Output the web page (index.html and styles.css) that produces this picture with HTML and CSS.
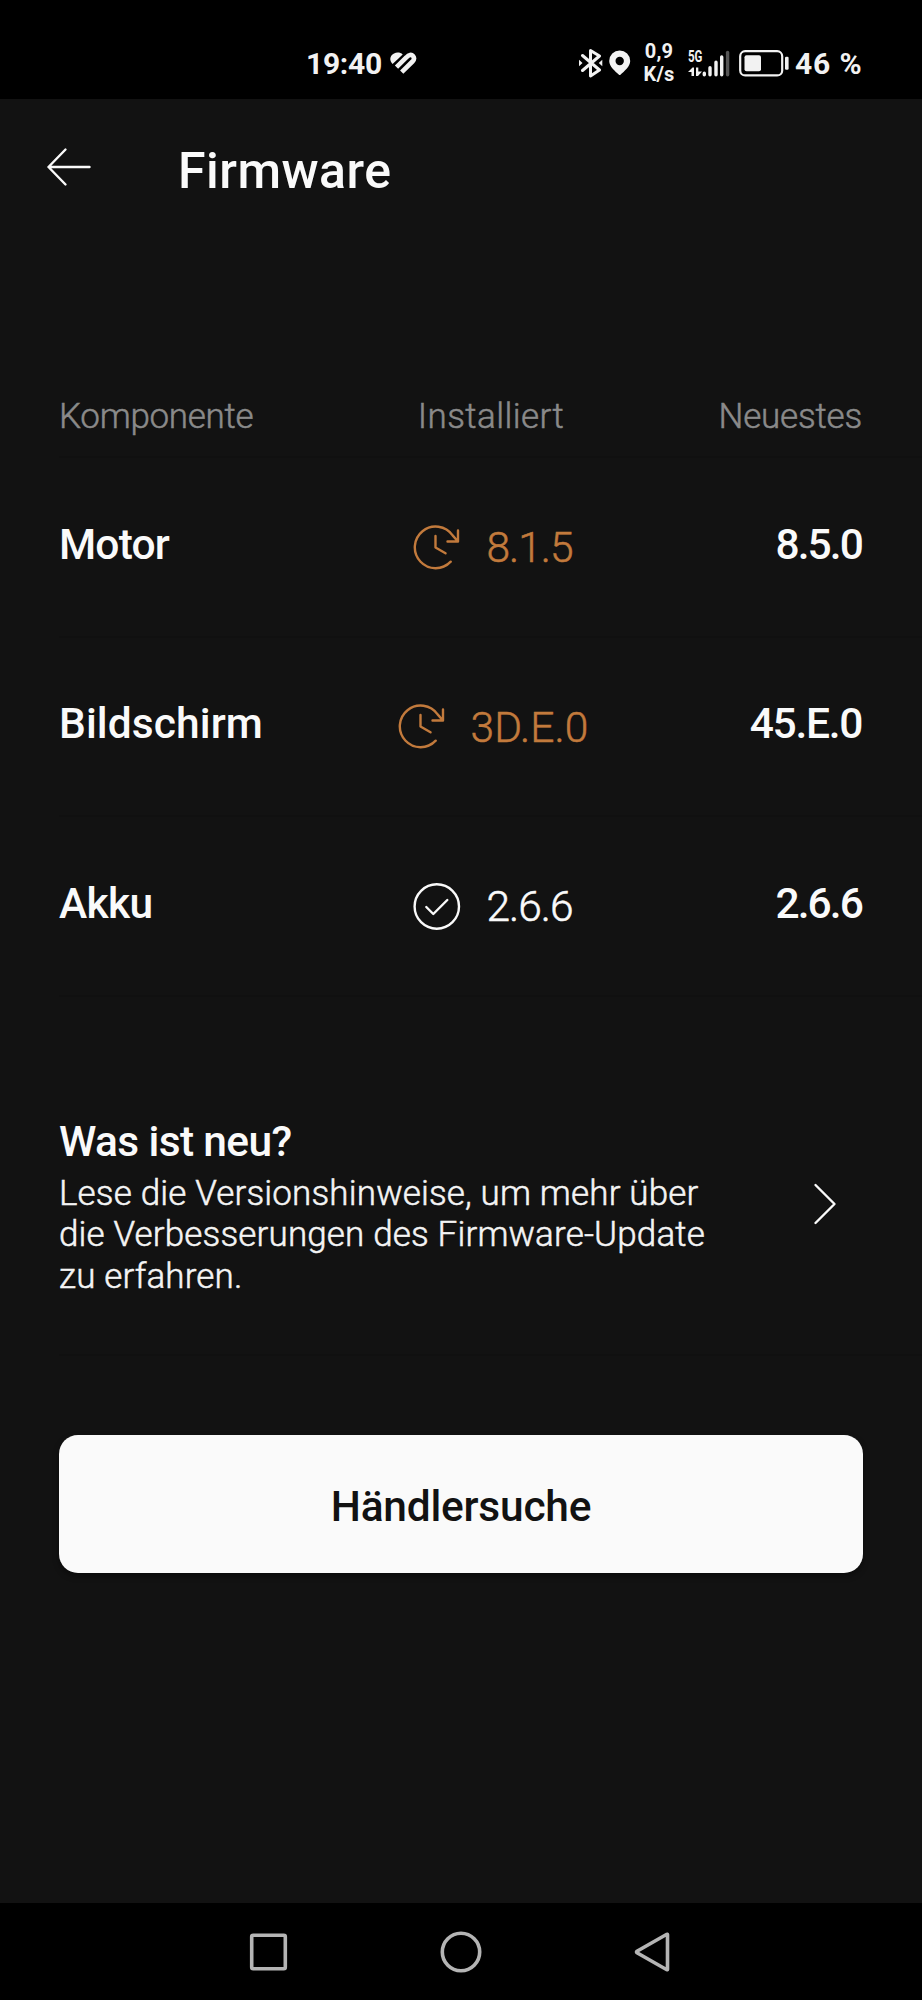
FILE: index.html
```html
<!DOCTYPE html>
<html lang="de">
<head>
<meta charset="utf-8">
<title>Firmware</title>
<link rel="stylesheet" href="styles.css">
</head>
<body>
<svg class="defs" aria-hidden="true">
  <symbol id="update" viewBox="0 0 48 48">
    <path d="M37.700 37.700A20.800 20.800 0 1 1 39.600 11.400L44.500 17M45 6.500V17.500H34.500M22.500 12V23.500l10 5.800"/>
  </symbol>
</svg>
<div class="screen">
  <header class="status">
    <div class="status-left">
      <span class="time">19:40</span>
      <svg class="heart" width="28" height="24" viewBox="390 51 28 24">
        <path class="solid" d="M393.6 64C389.8 60 391 55.500 395 53.500C398 52 401.500 52.500 403.700 54.400Z"/>
        <path class="band" d="M397.500 67.200L407.300 57.500C410 54.500 412.500 54.300 414 56C415.600 58 415 60 413.500 61.500L402.700 72.200"/>
      </svg>
    </div>
    <div class="status-right">
      <svg class="bt" width="24" height="30" viewBox="579 47 24 30">
        <path class="line" d="M582.500 54.500L599.500 69L590.500 75V49.500L599.500 55L582.500 69.500"/>
        <path class="solid" d="M579 58.800L582.500 62L579 65.200ZM602.300 58.800L598.800 62L602.300 65.200Z"/>
      </svg>
      <svg class="pin" width="22" height="26" viewBox="609 49.500 22 26">
        <path class="solid" fill-rule="evenodd" d="M619.700 50A10.500 10.500 0 0 1 630.200 60.500C630.200 66 624 71 620.700 74Q619.700 75 618.700 74C615.400 71 609.200 66 609.200 60.500A10.500 10.500 0 0 1 619.700 50ZM619.700 56.300A4.200 4.200 0 1 0 619.700 64.700A4.200 4.200 0 1 0 619.700 56.300Z"/>
      </svg>
      <div class="rate"><span class="rate-num">0,9</span><span>K/s</span></div>
      <div class="cell">
        <span class="gen">5G</span>
        <svg class="bars" width="42" height="27" viewBox="688 49 42 27">
          <path class="solid" d="M688 71L692.500 66.500H694V75H691.500V71ZM696 66.500H698.300V70.500H702L698 75H696Z"/>
          <path class="bar" d="M704.300 72.200V73.700M710 66.700V73.700M716 61.200V73.700M721.700 56V73.700"/>
          <path class="bar off" d="M727.600 51.500V73.700"/>
        </svg>
      </div>
      <svg class="battery" width="50" height="27" viewBox="739 50 50 27">
        <rect class="case" x="740.200" y="51.200" width="42" height="24.200" rx="5"/>
        <rect class="solid" x="744.500" y="55.300" width="16.500" height="16" rx="2"/>
        <rect class="solid" x="785" y="56.800" width="3.600" height="13" rx="1.200"/>
      </svg>
      <span class="percent">46 %</span>
    </div>
  </header>

  <div class="appbar">
    <svg class="back" width="46" height="40" viewBox="0 0 46 40">
      <path d="M19.500 2.500L2.500 20L19.500 37.500M2.500 20H43.500"/>
    </svg>
    <h1 class="title">Firmware</h1>
  </div>

  <main class="content">
    <div class="row head">
      <span class="komp">Komponente</span><span class="center inst">Installiert</span><span class="right neu">Neuestes</span>
    </div>
    <div class="row item">
      <span class="name motor">Motor</span>
      <span class="center installed old"><svg class="icon" width="48" height="48"><use href="#update"/></svg><span class="ver">8.1.5</span></span>
      <span class="right latest">8.5.0</span>
    </div>
    <div class="row item">
      <span class="name">Bildschirm</span>
      <span class="center installed old"><svg class="icon" width="48" height="48"><use href="#update"/></svg><span class="ver wide">3D.E.0</span></span>
      <span class="right latest alpha">45.E.0</span>
    </div>
    <div class="row item">
      <span class="name akku">Akku</span>
      <span class="center installed"><svg class="icon" width="48" height="48" viewBox="0 0 48 48"><circle cx="23.800" cy="23.500" r="22.200"/><path d="M13.300 24L20.300 31L34.300 17"/></svg><span class="ver">2.6.6</span></span>
      <span class="right latest">2.6.6</span>
    </div>

    <section class="news">
      <div class="news-text">
        <h2 class="news-title">Was ist neu?</h2>
        <p class="news-body">Lese die Versionshinweise, um mehr über<br>die Verbesserungen des Firmware-Update<br>zu erfahren.</p>
      </div>
      <svg class="chevron" width="26" height="44" viewBox="0 0 26 44">
        <path d="M3.500 3L22.500 22L3.500 41"/>
      </svg>
    </section>

    <button class="dealer">Händlersuche</button>
  </main>

  <nav class="nav">
    <svg width="42" height="42" viewBox="0 0 42 42"><rect x="3.700" y="4.200" width="33.600" height="33.600" rx="1.500"/></svg>
    <svg width="42" height="42" viewBox="0 0 42 42"><circle cx="21" cy="21" r="18.700"/></svg>
    <svg width="42" height="42" viewBox="0 0 42 42"><path d="M35.500 3.500V38.500Q35.500 39 34.800 38.700L5 21.700Q4 21 5 20.300L34.800 3.300Q35.500 3 35.500 3.500Z"/></svg>
  </nav>
</div>
</body>
</html>
```
FILE: styles.css
```css
* { box-sizing: border-box; }
body {
  margin: 0;
  background: #000;
  font-family: Roboto, "Noto Sans", sans-serif;
  color: #fafafa;
}
.defs { position: absolute; width: 0; height: 0; }
svg { display: block; flex: none; fill: none; }
h1, h2, p { margin: 0; }
.screen {
  width: 922px;
  height: 2000px;
  display: flex;
  flex-direction: column;
  background: #121212;
  overflow: hidden;
}

/* status bar */
.status {
  height: 99px;
  flex: none;
  background: #000;
  display: flex;
  justify-content: space-between;
  padding: 26px 59px 0 306px;
  color: #f2f2f2;
}
.status-left, .status-right { display: flex; align-items: center; height: 74px; }
.time { font-size: 30px; font-weight: 700; letter-spacing: -0.3px; }
.heart { margin-left: 7px; }
.solid { fill: #f2f2f2; }
.band { stroke: #f2f2f2; stroke-width: 4.600; }
.line { stroke: #f2f2f2; stroke-width: 3; stroke-linejoin: round; stroke-linecap: round; }
.bt { margin-right: 6px; }
.pin { margin-right: 12px; }
.rate {
  width: 32px;
  margin-right: 13px;
  display: flex;
  flex-direction: column;
  align-items: center;
  font-size: 20px;
  font-weight: 700;
  line-height: 23px;
  letter-spacing: 0.2px;
}
.cell { position: relative; width: 42px; height: 27px; margin-right: 9px; }
.gen {
  position: absolute;
  left: 0;
  top: 0;
  font-size: 16px;
  font-weight: 700;
  line-height: 14px;
  transform: scaleX(0.72);
  transform-origin: left;
}
.bar { stroke: #f2f2f2; stroke-width: 3.400; stroke-linecap: round; }
.off { stroke: #555; }
.case { stroke: #f2f2f2; stroke-width: 2.200; }
.percent { width: 68px; margin-left: 6px; font-size: 30px; font-weight: 700; letter-spacing: 0.9px; white-space: nowrap; }

/* app bar */
.appbar { height: 149px; flex: none; display: flex; align-items: flex-start; padding: 0 46px; }
.back { margin-top: 48px; stroke: #fafafa; stroke-width: 2.400; stroke-linecap: round; stroke-linejoin: round; }
.title { margin: 42px 0 0 86px; font-size: 50px; line-height: 60px; font-weight: 500; letter-spacing: 0.5px; }

/* component table */
.content { flex: 1; padding-left: 59px; }
.row {
  display: grid;
  grid-template-columns: 284px 300px 219px;
  align-items: center;
  border-bottom: 2px solid #101010;
}
.center { justify-self: center; }
.right { justify-self: end; }
.head, .ver, .news-body { font-weight: 300; -webkit-text-stroke: 0.5px currentColor; }
.head { height: 210px; padding-top: 129px; font-size: 35px; color: #8a8a8a; }
.komp { letter-spacing: -0.3px; }
.inst { letter-spacing: 0.4px; padding-right: 4px; }
.neu { letter-spacing: -0.2px; }
.item { height: 179.500px; font-size: 42.500px; padding-bottom: 5px; }
.name { font-weight: 500; letter-spacing: 0.1px; }
.motor { letter-spacing: -0.8px; }
.akku { letter-spacing: -0.7px; }
.latest { font-weight: 500; letter-spacing: -1.9px; }
.alpha { letter-spacing: -1.3px; }
.installed { display: flex; align-items: center; gap: 25px; padding-top: 7px; }
.icon { stroke: currentColor; stroke-width: 2.400; stroke-linecap: round; stroke-linejoin: round; }
.old { color: #c27a3c; }
.ver { letter-spacing: -1px; }
.wide { letter-spacing: 0.1px; }

/* release notes */
.news {
  height: 359px;
  display: flex;
  justify-content: space-between;
  padding: 119px 84px 0 0;
  border-bottom: 2px solid #101010;
}
.news-title { font-size: 42.500px; line-height: 52px; font-weight: 500; letter-spacing: -0.65px; }
.news-body { font-size: 35px; line-height: 41.500px; letter-spacing: 0.15px; white-space: nowrap; margin-top: 5px; color: #f4f4f4; }
.chevron { margin-top: 66px; stroke: #fafafa; stroke-width: 2.400; stroke-linecap: round; stroke-linejoin: round; }

.dealer {
  display: block;
  width: 804px;
  height: 138px;
  margin-top: 79px;
  padding: 6px 0 0;
  border: 0;
  border-radius: 19px;
  background: #fafafa;
  color: #121212;
  font-family: inherit;
  font-size: 42.500px;
  font-weight: 500;
  letter-spacing: -0.24px;
  box-shadow: 0 3px 6px rgba(0, 0, 0, 0.4);
}

/* system navigation */
.nav {
  height: 97px;
  flex: none;
  background: #000;
  display: flex;
  justify-content: center;
  gap: 150px;
  padding-top: 28px;
}
.nav svg { stroke: #b4b4b4; stroke-width: 3.600; }
```
